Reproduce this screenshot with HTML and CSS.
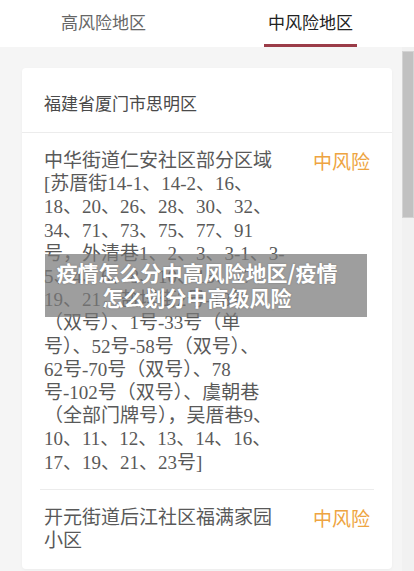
FILE: index.html
```html
<!DOCTYPE html>
<html lang="zh-CN">
<head>
    <meta charset="UTF-8">
    <meta name="viewport" content="width=device-width, initial-scale=1.0">
    <title>中风险地区</title>
    <link rel="stylesheet" href="styles.css">
</head>
<body>

    <div class="page">
        <nav class="tabs">
            <a href="#" class="tab"><span class="tab-label">高风险地区</span></a>
            <a href="#" class="tab active"><span class="tab-label">中风险地区</span></a>
        </nav>

        <main class="scroll-area">
            <section class="area-card">
                <h2 class="area-name">福建省厦门市思明区</h2>
                <ul class="risk-list">
                    <li class="risk-item">
                        <p class="address">中华街道仁安社区部分区域<br>[苏厝街14-1、14-2、16、<br>18、20、26、28、30、32、<br>34、71、73、75、77、91<br>号，外清巷1、2、3、3-1、3-<br>5、4、6、8、10、15、17、<br>19、21，盐埕街2号-18号<br>（双号）、1号-33号（单<br>号）、52号-58号（双号）、<br>62号-70号（双号）、78<br>号-102号（双号）、虞朝巷<br>（全部门牌号），吴厝巷9、<br>10、11、12、13、14、16、<br>17、19、21、23号]</p>
                        <span class="risk-level">中风险</span>
                    </li>
                    <li class="risk-item">
                        <p class="address">开元街道后江社区福满家园<br>小区</p>
                        <span class="risk-level">中风险</span>
                    </li>
                </ul>
            </section>

            <section class="area-card">
                <h2 class="area-name">福建省厦门市湖里区</h2>
                <ul class="risk-list">
                    <li class="risk-item">
                        <p class="address">殿前街道高林社区高林中<br>里89号、91号、93号</p>
                        <span class="risk-level">中风险</span>
                    </li>
                    <li class="risk-item">
                        <p class="address">湖里街道海天社区海天路<br>35号-47号</p>
                        <span class="risk-level">中风险</span>
                    </li>
                    <li class="risk-item">
                        <p class="address">江头街道县后社区县后高<br>林里1号-20号</p>
                        <span class="risk-level">中风险</span>
                    </li>
                </ul>
            </section>

            <section class="area-card">
                <h2 class="area-name">福建省厦门市同安区</h2>
                <ul class="risk-list">
                    <li class="risk-item">
                        <p class="address">大同街道东桥社区东桥路<br>12号-30号</p>
                        <span class="risk-level">中风险</span>
                    </li>
                    <li class="risk-item">
                        <p class="address">祥平街道祥平社区阳翟二<br>里1号-16号</p>
                        <span class="risk-level">中风险</span>
                    </li>
                    <li class="risk-item">
                        <p class="address">新民镇梧侣社区凤山自然<br>村</p>
                        <span class="risk-level">中风险</span>
                    </li>
                </ul>
            </section>
        </main>

        <div class="scroll-track"><div class="scroll-thumb"></div></div>

        <div class="caption">疫情怎么分中高风险地区/疫情<br>怎么划分中高级风险</div>
    </div>

</body>
</html>
```

FILE: styles.css
```css
:root {
    --accent-color: #9b3c48;
    --risk-color: #eea441;
    --background-color: #f5f5f5;
    --surface-color: #ffffff;
    --text-color: #595959;
    --border-color: #ececec;
}

body {
    margin: 0;
    font-family: "Noto Sans CJK SC", "Noto Sans", sans-serif;
    color: var(--text-color);
    background-color: var(--background-color);
}

.page {
    position: relative;
    height: 100vh;
    display: flex;
    flex-direction: column;
}

/* Tabs */
.tabs {
    display: flex;
    height: 47px;
    background-color: var(--surface-color);
    flex-shrink: 0;
}
.tab {
    flex: 1;
    display: flex;
    justify-content: center;
    text-decoration: none;
    color: #666666;
}
.tab-label {
    display: block;
    padding: 10px 4px;
    font-size: 17px;
    line-height: 24px;
    border-bottom: 3px solid transparent;
}
.tab.active { color: #222222; }
.tab.active .tab-label { border-bottom-color: var(--accent-color); }

/* List area */
.scroll-area {
    flex: 1;
    overflow-y: auto;
    scrollbar-width: none;
    padding: 21px 22px 0 22px;
}

.scroll-track {
    position: absolute;
    top: 47px;
    right: 0;
    bottom: 0;
    width: 12px;
    background-color: #f1f1f1;
}
.scroll-thumb {
    margin-top: 4px;
    height: 167px;
    box-sizing: border-box;
    background-color: #c1c1c1;
    border: 1px solid #d4d4d4;
}

.area-card {
    background-color: var(--surface-color);
    border-radius: 4px;
    box-shadow: 0 1px 3px rgba(0, 0, 0, 0.04);
    padding-bottom: 2px;
    margin-bottom: 21px;
}
.area-name {
    margin: 0;
    padding: 23px 22px 17px;
    font-size: 17px;
    font-weight: 400;
    line-height: 24px;
    color: #4a4a4a;
    border-bottom: 1px solid var(--border-color);
}

.risk-list {
    list-style: none;
    margin: 0;
    padding: 0;
}
.risk-item {
    display: flex;
    justify-content: space-between;
    align-items: flex-start;
    margin: 0 18px;
    padding: 16px 4px 15px;
    font-size: 19px;
    line-height: 23.2px;
}
.risk-item:not(:last-child) {
    border-bottom: 1px solid var(--border-color);
}
.address {
    margin: 0;
    white-space: nowrap;
    font-family: "Liberation Serif", "Noto Sans CJK SC", serif;
}
.risk-level {
    color: var(--risk-color);
    white-space: nowrap;
}

/* Caption banner laid over the list */
.caption {
    position: absolute;
    top: 254px;
    left: 45px;
    width: 304px;
    padding: 6px 18px 7px 0;
    background-color: rgba(120, 120, 120, 0.72);
    color: #ffffff;
    font-size: 21px;
    font-weight: 700;
    line-height: 25px;
    text-align: center;
    text-shadow: 0 0 2px rgba(0, 0, 0, 0.25);
}
```
